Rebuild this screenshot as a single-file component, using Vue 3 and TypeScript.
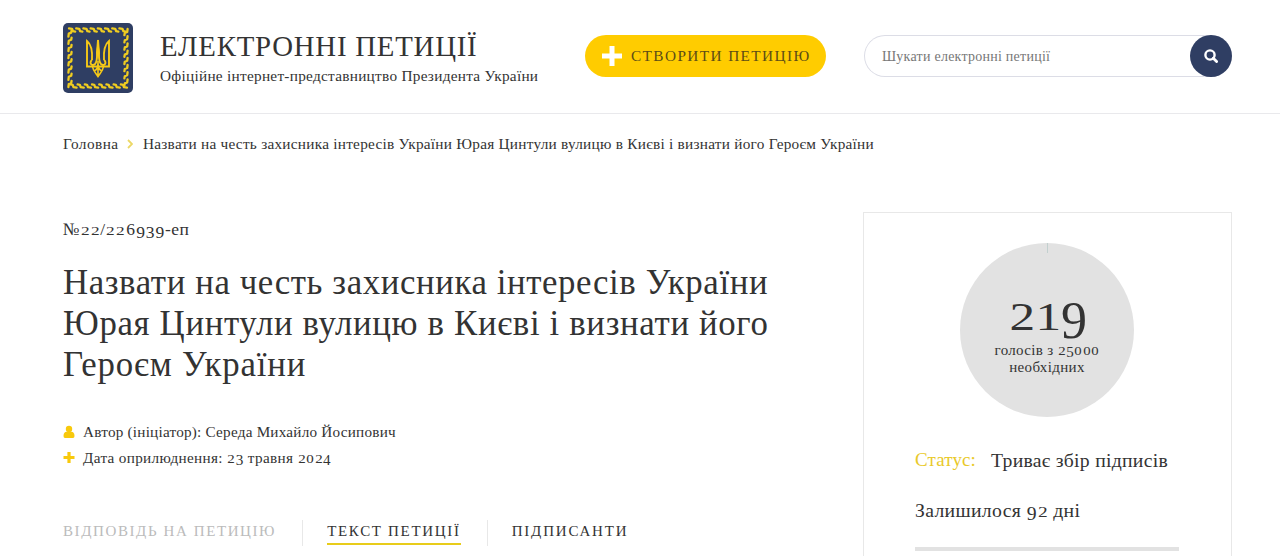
<script setup lang="ts">
import { h } from 'vue'

// Renders numerals in the old-style manner: 0, 1, 2 at x-height, 3, 4, 5, 7, 9 below the baseline.
const Numerals = (props: { text: string }) =>
  props.text.split(/(\d)/).filter(Boolean).map((c) =>
    /^[012]$/.test(c) ? h('span', { class: 'num-x' }, c)
      : /^[34579]$/.test(c) ? h('span', { class: 'num-d' }, c)
        : /^\d$/.test(c) ? h('span', { class: 'num-a' }, c) : c)
Numerals.props = ['text']

const titleLines = [
  'Назвати на честь захисника інтересів України',
  'Юрая Цинтули вулицю в Києві і визнати його',
  'Героєм України',
]
const tabs = [
  { label: 'Відповідь на петицію', state: 'disabled' },
  { label: 'Текст петиції', state: 'active' },
  { label: 'Підписанти', state: 'plain' },
]
// Offsets of the rope strands along each side of the emblem frame
const strands = Array.from({ length: 8 }, (_, i) => 7 + i * 7.2)
</script>

<template>
  <div class="page">
    <header class="header">
      <svg class="logo" viewBox="0 0 70 70">
        <rect width="70" height="70" rx="5" fill="#2f3e63" />
        <g v-for="a in [0, 90, 180, 270]" :key="a" :transform="`rotate(${a} 35 35)`" stroke-linecap="round">
          <path v-for="s in strands" :key="s" :d="`M${s - 1} 5.400L${s + 2} 5.800L${s + 3} 8.200L${s + 5.200} 8.600`" fill="none" stroke="#f0cd20" stroke-width="2.300" stroke-linejoin="round" />
        </g>
        <g fill="none" stroke="#f6c917" stroke-width="1.900">
          <path d="M29 37C29.500 29 29 22 24 18V43.500H46V18C41 22 40.500 29 41 37" />
          <path d="M29 37C25.500 40 29 43.500 32 41C34.500 38.500 34 33 34 30L35 17L36 30C36 33 35.500 38.500 38 41C41 43.500 44.500 40 41 37" />
          <path d="M29.500 43.500C30 48 33 50 35 53.500C37 50 40 48 40.500 43.500M35 38V53M31 48C34 47 35 44 35 40C35 44 36 47 39 48" stroke-width="1.600" />
        </g>
        <path d="M35 16L36.800 30L35 35L33.200 30Z" fill="#f6c917" />
      </svg>
      <div class="brand">
        <div class="brand-title">ЕЛЕКТРОННІ ПЕТИЦІЇ</div>
        <div class="brand-sub">Офіційне інтернет-представництво Президента України</div>
      </div>
      <a class="create">
        <svg class="create-plus" viewBox="0 0 20 20"><path d="M10 0V20M0 10H20" stroke="#fff" stroke-width="5" /></svg>
        <span>СТВОРИТИ ПЕТИЦІЮ</span>
      </a>
      <div class="search">
        <span class="search-hint">Шукати електронні петиції</span>
        <span class="search-btn">
          <svg viewBox="0 0 14 14"><circle cx="6" cy="6" r="4.600" fill="none" stroke="#fff" stroke-width="2.400" /><path d="M9.300 9.300L12.600 12.600" stroke="#fff" stroke-width="2.800" stroke-linecap="round" /></svg>
        </span>
      </div>
    </header>

    <nav class="crumbs">
      <span class="crumb-home">Головна</span>
      <svg class="chevron" viewBox="0 0 6 10"><path d="M1 1L5 5L1 9" fill="none" stroke="#ecd866" stroke-width="1.800" /></svg>
      <span class="crumb-here">Назвати на честь захисника інтересів України Юрая Цинтули вулицю в Києві і визнати його Героєм України</span>
    </nav>

    <div class="body">
      <main class="main">
        <div class="number"><Numerals text="№22/226939-еп" /></div>
        <h1 class="title">
          <span v-for="(l, i) in titleLines" :key="i" :class="['line', 'line-' + i]">{{ l }}</span>
        </h1>
        <div class="meta">
          <svg viewBox="0 0 12 14"><circle cx="6" cy="4" r="3.200" fill="#f8c90c" /><path d="M0.500 11C0.500 8 2 7 3.500 6.800H8.500C10 7 11.500 8 11.500 11Q11.500 13 10 13H2Q0.500 13 0.500 11Z" fill="#f8c90c" /></svg>
          <span class="author">Автор (ініціатор): Середа Михайло Йосипович</span>
        </div>
        <div class="meta">
          <svg viewBox="0 0 12 14"><path d="M6 1V12M0.500 6.500H11.500" stroke="#f8c90c" stroke-width="3.200" /></svg>
          <span class="date"><Numerals text="Дата оприлюднення: 23 травня 2024" /></span>
        </div>
        <div class="tabs">
          <div v-for="t in tabs" :key="t.label" class="tab-cell">
            <span :class="['tab', t.state]">{{ t.label }}</span>
          </div>
        </div>
      </main>

      <aside class="card">
        <div class="votes">
          <i class="tick"></i>
          <div class="count"><Numerals text="219" /></div>
          <div class="of"><Numerals text="голосів з 25000" /></div>
          <div class="of">необхідних</div>
        </div>
        <div class="status"><span class="status-label">Статус:</span><span class="status-value">Триває збір підписів</span></div>
        <div class="left"><Numerals text="Залишилося 92 дні" /></div>
        <div class="progress"></div>
      </aside>
    </div>
  </div>
</template>

<style>
body { background: #fff; }
.num-x { display: inline-block; line-height: 0; font-size: 0.77em; transform: scaleX(1.28); margin: 0 0.1em; }
.num-d { display: inline-block; line-height: 0; vertical-align: -0.16em; margin: 0 0.01em; }
.num-a { margin: 0 0.03em; }
</style>

<style scoped>
.page { height: 556px; overflow: hidden; background: #fff; color: #333; font-family: "Liberation Serif", serif; white-space: nowrap; }
.header { box-sizing: border-box; height: 114px; padding: 23px 48px 0 63px; border-bottom: 1px solid #e9e9ec; display: flex; align-items: flex-start; }
.logo { width: 70px; height: 70px; flex: none; }
.brand { margin: 7px 0 0 27px; width: 398px; }
.brand-title { font-size: 28.8px; line-height: 32px; letter-spacing: 0.78px; }
.brand-sub { margin-top: 4px; font-size: 15.3px; line-height: 20px; letter-spacing: 0.265px; }
.create { margin: 12px 0 0 27px; width: 241px; height: 42px; flex: none; border-radius: 21px; background: #fc0; display: flex; align-items: center; box-sizing: border-box; padding-left: 17px; font-size: 15.3px; letter-spacing: 1.4px; color: #5c4c16; }
.create-plus { width: 20px; height: 20px; margin-right: 9px; }
.search { margin: 12px 0 0 38px; box-sizing: border-box; width: 368px; height: 42px; flex: none; border: 1px solid #dcdde6; border-right: 0; border-radius: 21px; display: flex; align-items: center; justify-content: space-between; padding-left: 17px; font-size: 14px; letter-spacing: 0.25px; color: #777; }
.search-hint { padding-top: 1px; }
.search-btn { width: 42px; height: 42px; border-radius: 50%; background: #2f3e63; display: flex; align-items: center; justify-content: center; }
.search-btn svg { width: 14px; height: 14px; }
.crumbs { height: 20px; padding: 20px 0 0 63px; display: flex; align-items: center; font-size: 15.3px; line-height: 20px; letter-spacing: 0.247px; }
.chevron { width: 6px; height: 10px; margin: 0 10px 0 9px; }
.crumb-home { width: 55px; letter-spacing: 0.45px; }
.body { margin: 58px 48px 0 63px; display: flex; justify-content: space-between; }
.main { width: 760px; }
.number { margin-top: 6px; font-size: 17.5px; line-height: 23px; height: 22px; letter-spacing: 0.55px; }
.title { margin: 22px 0 0; font-weight: 400; font-size: 34.8px; line-height: 41px; letter-spacing: 0.6px; }
.line { display: block; width: max-content; }
.line-1 { letter-spacing: 0.66px; }
.line-2 { letter-spacing: 0.82px; }
.meta { display: flex; align-items: center; height: 26px; font-size: 15.2px; letter-spacing: 0.23px; }
.date { letter-spacing: 0.34px; }
.title + .meta { margin-top: 34px; }
.meta svg { width: 12px; height: 14px; margin-right: 8px; }
.tabs { display: flex; margin-top: 49px; height: 26px; }
.tab-cell { display: flex; }
.tab-cell + .tab-cell { margin-left: 26px; padding-left: 24px; border-left: 1px solid #e8e8e8; }
.tab { text-transform: uppercase; font-size: 15px; line-height: 23px; height: 23px; letter-spacing: 1.68px; }
.tab.disabled { color: #bbb; letter-spacing: 1.6px; }
.tab.active { border-bottom: 2px solid #e8cc1a; }
.tab.plain { letter-spacing: 1.8px; }
.card { box-sizing: border-box; width: 369px; height: 400px; border: 1px solid #e8e8e8; padding: 30px 51px 0; }
.votes { position: relative; width: 174px; height: 174px; margin: 0 0 0 45px; border-radius: 50%; background: #e2e2e2; text-align: center; box-sizing: border-box; padding-top: 45px; }
.tick { position: absolute; left: 87px; top: 0; width: 1px; height: 10px; background: #c2d0cf; }
.count { font-size: 52px; line-height: 50px; height: 53px; letter-spacing: -2px; }
.of { font-size: 15px; line-height: 18px; height: 17px; letter-spacing: 0.34px; }
.status { margin-top: 31px; font-size: 19.7px; line-height: 24px; display: flex; }
.status-label { width: 76px; color: #e9c92a; font-size: 19px; letter-spacing: 0.12px; }
.status-value { letter-spacing: 0.28px; }
.left { margin-top: 26px; font-size: 19.7px; line-height: 24px; height: 24px; letter-spacing: 0.34px; }
.progress { margin-top: 25px; height: 4px; width: 264px; background: #e2e2e2; }
</style>
